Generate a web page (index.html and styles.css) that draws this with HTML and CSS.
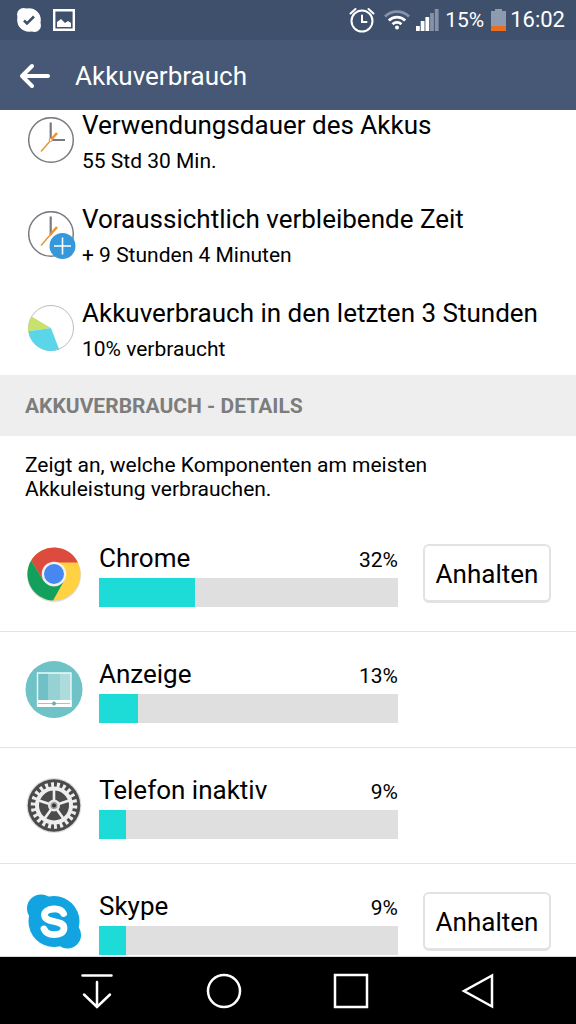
FILE: index.html
```html
<!DOCTYPE html>
<html lang="de">
<head>
<meta charset="utf-8">
<meta name="viewport" content="width=device-width, initial-scale=1">
<title>Akkuverbrauch</title>
<link rel="stylesheet" href="styles.css">
</head>
<body>
<div class="status">
  <div class="status-left">
    <svg width="26" height="26" viewBox="0 0 26 26"><g fill="#fff"><circle cx="13" cy="13" r="11.800"/><circle cx="7.500" cy="7.500" r="6.500"/><circle cx="18.500" cy="18.500" r="6.500"/></g><path d="M8 13.500l3 3 7-7" fill="none" stroke="#3f506d" stroke-width="2.500"/></svg>
    <svg width="22" height="22" viewBox="0 0 22 22"><path d="M1.200 1.200h19.600v19.600H1.200z" fill="none" stroke="#fff" stroke-width="2.400"/><path d="M4 18v-5l4-3 4 4 3-2 3 2v4z" fill="#fff"/></svg>
  </div>
  <div class="status-right">
    <svg width="26" height="26" viewBox="0 0 26 26" fill="none" stroke="#fff" stroke-width="2" stroke-linecap="round"><circle cx="13" cy="14" r="10.500"/><path d="M13 8.500V15h4.500M1.500 6.500L6.500 2M24.500 6.500L19.500 2"/></svg>
    <svg class="wifi" width="26" height="22" viewBox="0 0 26 22" fill="none" stroke-width="2.800"><path d="M1 7.500a17 17 0 0 1 24 0" stroke="#8592a8"/><path d="M4.800 11.500a11.500 11.500 0 0 1 16.400 0M8.600 15.200a6.200 6.200 0 0 1 8.800 0" stroke="#fff"/><circle cx="13" cy="18.500" r="2" fill="#fff"/></svg>
    <svg class="signal" width="23" height="22" viewBox="0 0 23 22"><path d="M0 17h3.800v5H0zM4.700 12h3.800v10H4.700zM9.400 8h3.800v14H9.400z" fill="#fff"/><path d="M14.100 4h3.800v18h-3.800zM18.800 0h3.800v22h-3.800z" fill="#8592a8"/></svg>
    <span class="level">15%</span>
    <svg class="battery" width="15" height="22" viewBox="0 0 15 22"><path d="M4 0h7v2h4v15H0V2h4z" fill="#8e9aad"/><path d="M0 17h15v5H0z" fill="#e96f20"/></svg>
    <span>16:02</span>
  </div>
</div>
<header class="appbar">
  <button class="back" aria-label="Zurück"><svg width="32" height="26" viewBox="0 0 32 26" fill="none" stroke="#fff" stroke-width="4" stroke-linecap="round" stroke-linejoin="round"><path d="M29 13H3M13 3L3 13l10 10"/></svg></button>
  <h1>Akkuverbrauch</h1>
</header>
<main class="content">
  <section class="summary">
    <div class="info">
      <svg class="info-icon" width="50" height="50" viewBox="0 0 50 50" fill="none"><circle cx="23" cy="23" r="22.300" stroke="#777b80" stroke-width="1.500"/><path d="M22.700 5.500V23H37" stroke="#777b80" stroke-width="2.200"/><path d="M13 34.500L23 23" stroke="#e3963f" stroke-width="1.500"/><path d="M22 24l7-8" stroke="#f0922b" stroke-width="2.600"/><circle cx="22.700" cy="23" r="1.500" fill="#fff" stroke="#f0922b"/></svg>
      <div><h2>Verwendungsdauer des Akkus</h2><p>55 Std 30 Min.</p></div>
    </div>
    <div class="info">
      <svg class="info-icon" width="50" height="50" viewBox="0 0 50 50" fill="none"><circle cx="23" cy="23" r="22.300" stroke="#777b80" stroke-width="1.500"/><path d="M22.700 5.500V23" stroke="#777b80" stroke-width="2.200"/><path d="M13 34.500L23 23" stroke="#e3963f" stroke-width="1.500"/><path d="M22 24l7-8" stroke="#f0922b" stroke-width="2.600"/><circle cx="34.500" cy="35" r="13" fill="#3498db"/><path d="M34.500 26.500v17M26 35h17" stroke="#fff" stroke-width="1.600"/></svg>
      <div><h2>Voraussichtlich verbleibende Zeit</h2><p>+ 9 Stunden 4 Minuten</p></div>
    </div>
    <div class="info">
      <svg class="info-icon" width="50" height="50" viewBox="0 0 50 50"><circle cx="23" cy="23" r="22.500" fill="#fff" stroke="#aaa" stroke-width=".8"/><path d="M23 23L.3 26.200A23 23 0 0 1 3.600 11.500z" fill="#c8e06c"/><path d="M23 23l8.200 21.500A23 23 0 0 1 .3 26.200z" fill="#5bd5e8"/></svg>
      <div><h2>Akkuverbrauch in den letzten 3 Stunden</h2><p>10% verbraucht</p></div>
    </div>
  </section>
  <h3 class="section-title">AKKUVERBRAUCH - DETAILS</h3>
  <p class="hint">Zeigt an, welche Komponenten am meisten Akkuleistung verbrauchen.</p>
  <ul class="apps">
    <li class="app">
      <svg width="58" height="58" viewBox="0 0 58 58"><circle cx="29" cy="30" r="27" fill="#dcdcdc"/><circle cx="29" cy="29" r="26.500" fill="#ffd143"/><path d="M29 29L18.200 35.300 6.100 15.600A26.500 26.500 0 0 1 52.900 17.500H29z" fill="#dc4b3e"/><path d="M6.100 15.600L18.200 35.300 29 41.500 39 36 28 55.500A26.500 26.500 0 0 1 6.100 15.600z" fill="#12a05c"/><circle cx="29" cy="29" r="12.300" fill="#f1f1f1"/><circle cx="29" cy="29" r="10" fill="#4688f1"/></svg>
      <div class="usage"><label id="a1">Chrome</label><span>32%</span><div class="bar" role="meter" aria-labelledby="a1" aria-valuenow="32"><div class="fill" style="width:32%"></div></div></div>
      <button class="stop">Anhalten</button>
    </li>
    <li class="app">
      <svg width="58" height="58" viewBox="0 0 58 58"><circle cx="29" cy="28.500" r="28.500" fill="#6fc2c6"/><path d="M12 12h34v28H12z" fill="#70c1c5"/><path d="M23 12h12v28H23z" fill="#96d1d3"/><path d="M35 12h11v28H35z" fill="#aedcdd"/><path d="M12.500 12h33.500v33H12.500z" fill="none" stroke="#eafafa" stroke-width="1.400"/><path d="M12 39h34.500v7H12z" fill="#fff"/><path d="M13 42.500h32" stroke="#90cdd0"/><circle cx="29" cy="42.500" r="2" fill="#69aeb2"/></svg>
      <div class="usage"><label id="a2">Anzeige</label><span>13%</span><div class="bar" role="meter" aria-labelledby="a2" aria-valuenow="13"><div class="fill" style="width:13%"></div></div></div>
    </li>
    <li class="app">
      <svg width="58" height="58" viewBox="0 0 58 58"><circle cx="29" cy="28.500" r="27.500" fill="#dedede"/><circle cx="29" cy="28.500" r="26.300" fill="#4b4b4b"/><circle cx="29" cy="28.500" r="20.500" fill="none" stroke="#eee" stroke-width="5.500" stroke-dasharray="3 3" pathLength="132"/><circle cx="29" cy="28.500" r="17" fill="none" stroke="#eee" stroke-width="4"/><path d="M29 28.500V12.500M29 28.500l15.200-5M29 28.500l9.400 13M29 28.500l-9.400 13M29 28.500l-15.200-5" stroke="#eee" stroke-width="2.600"/><circle cx="29" cy="28.500" r="6" fill="#e8e8e8"/><circle cx="29" cy="28.500" r="3.500" fill="#999"/><circle cx="29" cy="28.500" r="2" fill="#333"/></svg>
      <div class="usage"><label id="a3">Telefon inaktiv</label><span>9%</span><div class="bar" role="meter" aria-labelledby="a3" aria-valuenow="9"><div class="fill" style="width:9%"></div></div></div>
    </li>
    <li class="app">
      <svg width="58" height="58" viewBox="0 0 58 58"><g fill="#12a4e0"><circle cx="29" cy="28.500" r="25.500"/><circle cx="16" cy="15.500" r="14"/><circle cx="42.500" cy="42" r="13.500"/></g><path d="M38.500 20.500C36.500 16.800 32.500 15.800 28.500 16C22.500 16.300 19.500 18.800 19.500 22C19.500 31 39.500 26 39 35.500C38.500 40 34 41.800 29 41.700C23.500 41.500 20.500 39.500 19 36" fill="none" stroke="#fff" stroke-width="6.800" stroke-linecap="round"/></svg>
      <div class="usage"><label id="a4">Skype</label><span>9%</span><div class="bar" role="meter" aria-labelledby="a4" aria-valuenow="9"><div class="fill" style="width:9%"></div></div></div>
      <button class="stop">Anhalten</button>
    </li>
  </ul>
</main>
<nav class="nav">
  <button aria-label="Benachrichtigungen"><svg width="36" height="36" viewBox="0 0 36 36"><path d="M3.500 2.500h29M18 9v24M5 21.500l13 12.500 13-12.500"/></svg></button>
  <button aria-label="Startseite"><svg width="36" height="36" viewBox="0 0 36 36"><circle cx="18" cy="18" r="16"/></svg></button>
  <button aria-label="Übersicht"><svg width="36" height="36" viewBox="0 0 36 36"><path d="M2 2h32v32H2z"/></svg></button>
  <button aria-label="Zurück"><svg width="36" height="36" viewBox="0 0 36 36"><path d="M32 2.500v31L4 18z"/></svg></button>
</nav>
</body>
</html>
```

FILE: styles.css
```css
* { box-sizing: border-box; margin: 0; padding: 0; }
body {
  display: flex;
  flex-direction: column;
  height: 100vh;
  overflow: hidden;
  background: #fff;
  color: #000;
  font-family: Roboto, sans-serif;
  font-size: 21px;
  line-height: 24px;
}
svg { display: block; flex: none; }
button { font: inherit; color: inherit; background: none; border: 0; }
h1, h2 { font-size: 26px; line-height: 30px; font-weight: 400; }

.status {
  flex: none;
  display: flex;
  align-items: center;
  justify-content: space-between;
  height: 40px;
  padding: 0 11px 0 16px;
  background: #3f506d;
  color: #fff;
}
.status-left, .status-right { display: flex; align-items: center; }
.status-left { gap: 11px; }
.status-right { font-size: 22px; }
.wifi { margin-left: 9px; }
.signal { margin-left: 6px; }
.level { margin-left: 6px; font-size: 21px; }
.battery { margin: 0 4px 0 7px; }

.appbar {
  flex: none;
  display: flex;
  align-items: center;
  gap: 24px;
  height: 70px;
  padding: 2px 19px 0;
  background: #465876;
  color: #fff;
}

.content { flex: 1; min-height: 0; overflow: hidden; border-bottom: 1px solid #d8d8d8; }
.summary { display: grid; gap: 31px; padding-bottom: 14px; }
.info { display: flex; gap: 4px; padding-left: 28px; }
.info-icon { margin-top: 7px; }
.info p { margin-top: 9px; }

.section-title {
  padding: 19px 25px 18px;
  background: #eee;
  color: #7d7d7d;
  font-size: 21px;
  line-height: 24px;
  font-weight: 700;
}
.hint { max-width: 500px; padding: 17px 25px 15px; }

.apps { list-style: none; }
.app {
  display: grid;
  grid-template-columns: 58px 1fr 128px;
  align-items: center;
  height: 116px;
  padding: 0 25px;
  border-bottom: 1px solid #e3e3e3;
}
.usage {
  display: grid;
  grid-template-columns: 1fr auto;
  align-items: center;
  row-gap: 5px;
  margin: 3px 25px 0 16px;
}
.usage label { font-size: 26px; line-height: 30px; }
.usage span { padding-top: 3px; }
.bar { grid-column: 1 / -1; height: 29px; background: #dfdfdf; }
.fill { height: 100%; background: #1ddbd7; }
.stop {
  height: 59px;
  padding-top: 2px;
  border: 2px solid #e2e2e2;
  border-bottom-width: 3px;
  border-radius: 6px;
  background: #fff;
  font-size: 26px;
}

.nav {
  flex: none;
  display: grid;
  grid-template-columns: repeat(4, 1fr);
  height: 67px;
  padding: 0 35px 0 33px;
  background: #000;
}
.nav button { display: flex; align-items: center; justify-content: center; }
.nav svg { fill: none; stroke: #fff; stroke-width: 2.5; stroke-linecap: round; }
```
